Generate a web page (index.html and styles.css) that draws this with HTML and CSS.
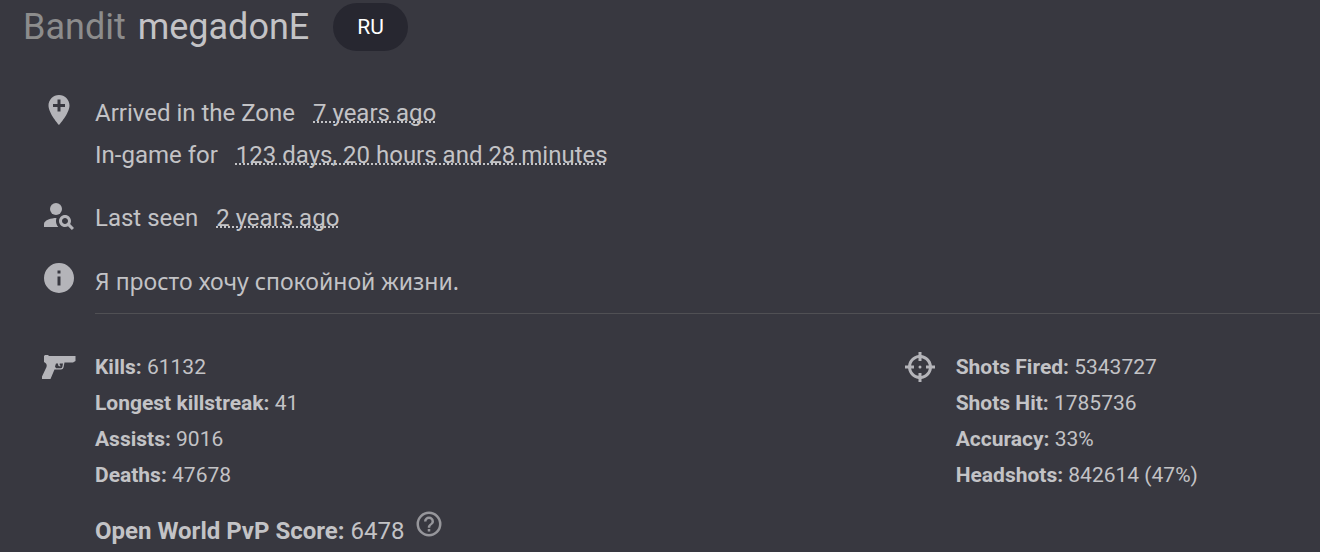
FILE: index.html
```html
<!DOCTYPE html>
<html lang="en">
<head>
  <meta charset="utf-8">
  <meta name="viewport" content="width=device-width, initial-scale=1.0">
  <title>megadonE - player profile</title>
  <link rel="stylesheet" href="styles.css">
</head>
<body>
  <header class="profile-header">
    <h1><span class="rank">Bandit</span> megadonE</h1>
    <span class="chip">RU</span>
  </header>

  <main class="profile">
    <section class="row">
      <svg class="icon" viewBox="0 0 24 24" aria-hidden="true"><path d="M12,2C15.86,2 19,5.14 19,9C19,14.25 12,22 12,22C12,22 5,14.25 5,9C5,5.14 8.14,2 12,2M8,8V10H11V13H13V10H16V8H13V5H11V8H8Z"/></svg>
      <div class="row-text">
        <p>Arrived in the Zone <abbr>7 years ago</abbr></p>
        <p>In-game for <abbr>123 days, 20 hours and 28 minutes</abbr></p>
      </div>
    </section>

    <section class="row">
      <svg class="icon" viewBox="0 0 24 24" aria-hidden="true"><circle cx="10" cy="8" r="4"/><path d="M10.35,14.01C7.62,13.91 2,15.27 2,18V20H11.54C9.07,17.24 10.31,14.11 10.35,14.01Z"/><path d="M19.43,18.02C19.79,17.43 20,16.74 20,16C20,13.79 18.21,12 16,12C13.79,12 12,13.79 12,16C12,18.21 13.79,20 16,20C16.74,20 17.43,19.78 18.02,19.43L20.59,22L22,20.59L19.43,18.02M16,18C14.9,18 14,17.1 14,16C14,14.9 14.9,14 16,14C17.1,14 18,14.9 18,16C18,17.1 17.1,18 16,18Z"/></svg>
      <div class="row-text">
        <p>Last seen <abbr>2 years ago</abbr></p>
      </div>
    </section>

    <section class="row">
      <svg class="icon" viewBox="0 0 24 24" aria-hidden="true"><path d="M13,9H11V7H13M13,17H11V11H13M12,2A10,10 0 0,0 2,12A10,10 0 0,0 12,22A10,10 0 0,0 22,12A10,10 0 0,0 12,2Z"/></svg>
      <div class="row-text about">
        <p lang="ru">Я просто хочу спокойной жизни.</p>
      </div>
    </section>

    <div class="stats">
      <section class="row">
        <svg class="icon" viewBox="0 0 36 36" aria-hidden="true"><path fill-rule="evenodd" d="M3,7L4,6H7L8,7H34.5V12L32,13.5H23.5L22.5,18.5Q22,20.5 20,20.5H13.5L9.5,30H1V27.5L5.5,18Q6.5,14.5 3,13ZM15,14.5L14,17.5L15,19.3H19.5Q21,19.3 21.3,18L22,14.5H18.7V16L20,17.3H18Q16.8,16.5 17,14.5Z"/></svg>
        <div class="stat-text">
          <p><b>Kills:</b> 61132</p>
          <p><b>Longest killstreak:</b> 41</p>
          <p><b>Assists:</b> 9016</p>
          <p><b>Deaths:</b> 47678</p>
        </div>
      </section>
      <section class="row">
        <svg class="icon" viewBox="0 0 24 24" aria-hidden="true"><path d="M11,2V4.07C7.38,4.53 4.53,7.38 4.07,11H2V13H4.07C4.53,16.62 7.38,19.47 11,19.93V22H13V19.93C16.62,19.47 19.47,16.62 19.93,13H22V11H19.93C19.47,7.38 16.62,4.53 13,4.07V2M11,6.08V8H13V6.09C15.5,6.5 17.5,8.5 17.92,11H16V13H17.91C17.5,15.5 15.5,17.5 13,17.92V16H11V17.91C8.5,17.5 6.5,15.5 6.08,13H8V11H6.09C6.5,8.5 8.5,6.5 11,6.08M12,11A1,1 0 0,0 11,12A1,1 0 0,0 12,13A1,1 0 0,0 13,12A1,1 0 0,0 12,11Z"/></svg>
        <div class="stat-text">
          <p><b>Shots Fired:</b> 5343727</p>
          <p><b>Shots Hit:</b> 1785736</p>
          <p><b>Accuracy:</b> 33%</p>
          <p><b>Headshots:</b> 842614 (47%)</p>
        </div>
      </section>
    </div>

    <div class="score">
      <p><b>Open World PvP Score:</b> 6478</p>
      <svg class="help" viewBox="0 0 24 24" aria-hidden="true"><path d="M11,18H13V16H11V18M12,2A10,10 0 0,0 2,12A10,10 0 0,0 12,22A10,10 0 0,0 22,12A10,10 0 0,0 12,2M12,20C7.59,20 4,16.41 4,12C4,7.59 7.59,4 12,4C16.41,4 20,7.59 20,12C20,16.41 16.41,20 12,20M12,6A4,4 0 0,0 8,10H10A2,2 0 0,1 12,8A2,2 0 0,1 14,10C14,12 11,11.75 11,15H13C13,12.75 16,12.5 16,10A4,4 0 0,0 12,6Z"/></svg>
    </div>
  </main>
</body>
</html>
```
FILE: styles.css
```css
body {
  margin: 0;
  background-color: #383840;
  color: #c3c3c6;
  font-family: Roboto, "Noto Sans", sans-serif;
  font-size: 24px;
  line-height: 42px;
}
h1, p {
  margin: 0;
}
h1 {
  font-size: 36px;
  font-weight: 400;
  line-height: 48px;
}
.profile-header {
  display: flex;
  align-items: center;
  gap: 24px;
  padding: 3px 23px 0;
}
.rank {
  margin-right: 3px;
  color: #8c8c8c;
}
.chip {
  padding: 0 24px;
  border-radius: 24px;
  background-color: #272730;
  color: #ffffff;
  font-size: 21px;
  line-height: 48px;
}
.profile {
  padding: 41px 0 0 41px;
}
.row {
  display: flex;
  align-items: flex-start;
  gap: 18px;
  margin-bottom: 21px;
}
.icon {
  flex: none;
  width: 36px;
  height: 36px;
  fill: #b4b4b9;
}
.row-text {
  flex: 1;
}
.row-text abbr {
  margin-left: 12px;
  text-decoration: underline dotted 2px;
  text-decoration-skip-ink: none;
  text-underline-offset: 0;
}
.about {
  border-bottom: 1px solid #505054;
  padding-bottom: 11px;
  font-family: "Noto Sans", sans-serif;
  font-size: 23px;
}
.stats {
  display: grid;
  grid-template-columns: 2fr 1fr;
  gap: 24px;
  margin-top: 35px;
}
.stats .row {
  margin-bottom: 0;
}
.stat-text {
  font-size: 21px;
  line-height: 36px;
}
.score {
  display: flex;
  align-items: flex-start;
  gap: 10px;
  padding: 16px 0 0 54px;
}
.score p {
  line-height: 44px;
}
.help {
  width: 30px;
  height: 30px;
  fill: #96969b;
}
```
